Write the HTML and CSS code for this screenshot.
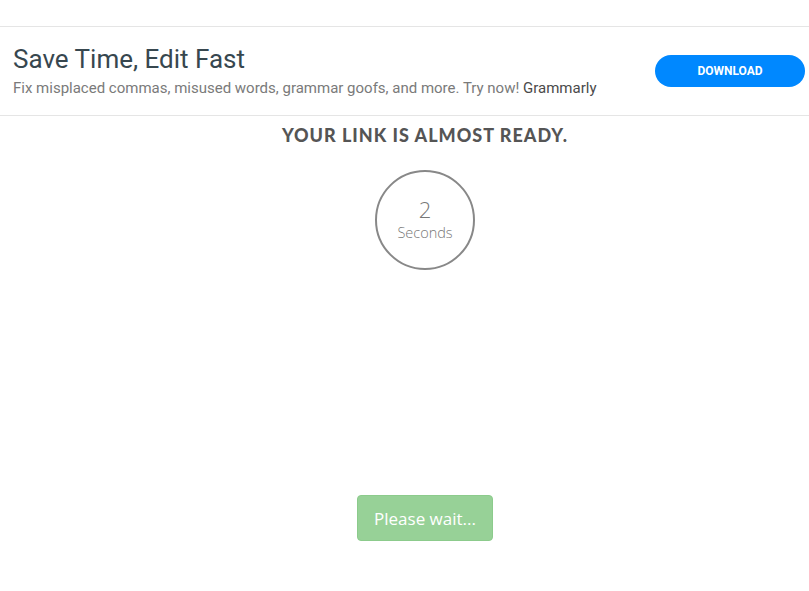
FILE: index.html
```html
<!DOCTYPE html>
<html>
<head>
  <title>Your link is almost ready</title>
  <link rel="stylesheet" href="styles.css">
</head>
<body>
  <div class="ad">
    <div class="ad-text">
      <h2>Save Time, Edit Fast</h2>
      <p>Fix misplaced commas, misused words, grammar goofs, and more. Try now! <span class="brand">Grammarly</span></p>
    </div>
    <a class="ad-btn" href="#">DOWNLOAD</a>
  </div>

  <div class="container">
    <h1>YOUR LINK IS ALMOST READY.</h1>
    <div class="timer">
      <span id="count">2</span>
      <span class="unit">Seconds</span>
    </div>
    <button class="wait-btn" disabled>Please wait...</button>
  </div>
</body>
</html>
```

FILE: styles.css
```css
body {
  margin: 0;
  padding: 0;
  font-family: "Open Sans", Arial, sans-serif;
  background-color: #fff;
}
.ad {
  margin-top: 26px;
  border-top: 1px solid #e5e5e5;
  border-bottom: 1px solid #e5e5e5;
  height: 88px;
  display: flex;
  align-items: center;
  justify-content: space-between;
  padding: 0 4px 0 13px;
  font-family: Roboto, Arial, sans-serif;
}
.ad h2 {
  margin: 0;
  font-size: 26px;
  font-weight: 400;
  color: #37474f;
  line-height: 30px;
}
.ad p {
  margin: 4px 0 0;
  font-size: 15px;
  line-height: 20px;
  color: #7a7a7a;
}
.ad .brand {
  color: #4a4a4a;
}
.ad-btn {
  display: block;
  width: 150px;
  height: 32px;
  line-height: 32px;
  border-radius: 16px;
  background-color: #0088ff;
  color: #fff;
  text-align: center;
  text-decoration: none;
  font-size: 12px;
  font-weight: 700;
}
.container {
  padding-left: 41px;
  display: flex;
  flex-direction: column;
  align-items: center;
}
h1 {
  margin: 9px 0 0;
  font-family: Lato, Arial, sans-serif;
  font-size: 18px;
  font-weight: 900;
  letter-spacing: 1px;
  color: #555;
  line-height: 20px;
}
.timer {
  margin-top: 25px;
  width: 96px;
  height: 96px;
  border: 2px solid #888;
  border-radius: 50%;
  display: flex;
  flex-direction: column;
  align-items: center;
  justify-content: center;
  gap: 3px;
  color: #777;
  font-weight: 300;
}
#count {
  font-size: 22px;
  line-height: 22px;
}
.unit {
  font-size: 14.5px;
  line-height: 19px;
}
.wait-btn {
  margin-top: 225px;
  width: 136px;
  height: 46px;
  border: 1px solid #8ccb8c;
  border-radius: 4px;
  background-color: #97d197;
  color: #fff;
  font-family: "Open Sans", Arial, sans-serif;
  font-size: 17px;
}
```
